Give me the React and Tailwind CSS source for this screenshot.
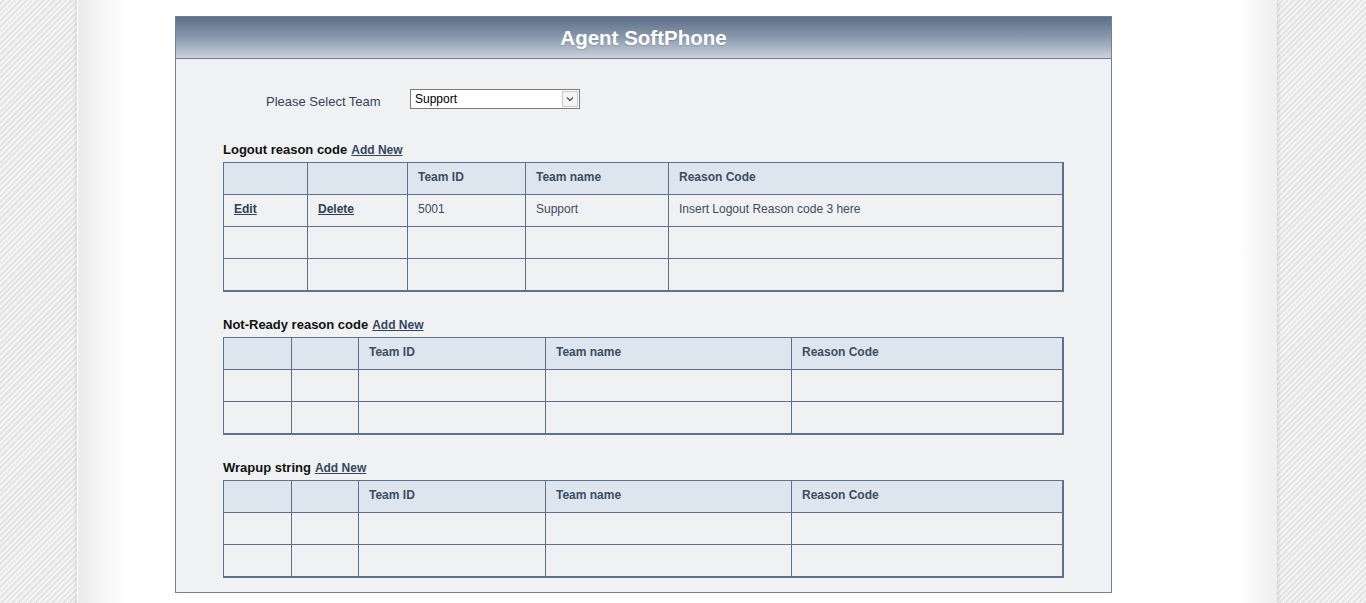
import React from "react";

const stripe =
  "bg-[repeating-linear-gradient(135deg,#f4f4f4_0px,#f4f4f4_2px,#e4e4e4_2px,#e4e4e4_4px)]";

function Cell({ cell, last, lastRow, header }) {
  const base = `border-[#5f7189] pl-[10px] pt-[8px] leading-[13px] text-[12px] ${
    last ? "" : "border-r"
  } ${lastRow ? "h-[31px]" : "h-[32px] border-b"}`;
  if (header) {
    return (
      <div className={`${base} bg-[#dde5ee] font-bold text-[#3c4d63]`}>{cell.text}</div>
    );
  }
  return (
    <div className={`${base} text-[#3e4c5c]`}>
      {cell.link ? (
        <span className="font-bold underline text-[#2f3f55]">{cell.text}</span>
      ) : (
        <span>{cell.text}</span>
      )}
    </div>
  );
}

function Table({ widths, rows }) {
  const cols = widths.map((w) => `${w}px`).join(" ");
  const header = ["", "", "Team ID", "Team name", "Reason Code"].map((t) => ({ text: t }));
  return (
    <div className="w-[841px] border-t border-l border-r-2 border-b-2 border-[#5f7189]">
      <div className="grid" style={{ gridTemplateColumns: cols }}>
        {header.map((h, i) => (
          <Cell key={"h" + i} cell={h} header last={i === 4} />
        ))}
        {rows.map((r, ri) =>
          r.map((c, i) => (
            <Cell
              key={"r" + ri + "c" + i}
              cell={c}
              last={i === 4}
              lastRow={ri === rows.length - 1}
            />
          ))
        )}
      </div>
    </div>
  );
}

function Section({ title, widths, rows }) {
  return (
    <div className="flex flex-col">
      <div className="h-[16px] flex items-center gap-[4px] mb-[4px]">
        <span className="text-[13px] font-bold text-[#111]">{title}</span>
        <span className="text-[12px] font-bold underline text-[#34465e]">Add New</span>
      </div>
      <Table widths={widths} rows={rows} />
    </div>
  );
}

const emptyRow = () => [0, 1, 2, 3, 4].map(() => ({ text: "" }));

export default function App() {
  return (
    <div
      className={`w-[1366px] h-[603px] overflow-hidden flex ${stripe}`}
      style={{ fontFamily: '"Liberation Sans", Arial, sans-serif' }}
    >
      <div className="w-[73px] shrink-0" />
      <div className="w-[4px] shrink-0 bg-[linear-gradient(to_right,rgba(0,0,0,0),rgba(0,0,0,0.07))]" />
      <div className="w-[1200px] shrink-0 h-full bg-[linear-gradient(to_right,#ebebeb_0px,#ffffff_48px,#ffffff_1160px,#eeeeee_1199px)] border-l border-white">
        <div className="ml-[97px] mt-[16px] w-[937px] border border-[#6f8197] bg-[#f0f1f3]">
          <div className="h-[42px] pt-[2px] border-b border-[#6f8197] bg-[linear-gradient(to_bottom,#5d6f87,#8a99ad_50%,#cbd3dc)] flex items-center justify-center">
            <span className="text-[20.5px] font-bold text-white [text-shadow:0_1px_1px_rgba(0,0,0,0.15)]">
              Agent SoftPhone
            </span>
          </div>
          <div className="pt-[30px] pb-[14px] pl-[47px]">
            <div className="flex items-center h-[20px]">
              <span className="ml-[43px] w-[144px] pt-[5px] text-[13px] text-[#33445a]">
                Please Select Team
              </span>
              <div className="w-[170px] h-[20px] bg-white border border-[#7b7b7b] flex items-center">
                <span className="flex-1 pl-[4px] text-[12px] text-black">Support</span>
                <div className="w-[16px] h-[16px] mr-[1px] border border-[#c8c8c8] bg-[#f4f4f4] flex items-center justify-center">
                  <svg width="8" height="6" viewBox="0 0 8 6">
                    <path d="M1 1.5 L4 4.5 L7 1.5" stroke="#555" strokeWidth="1.3" fill="none" />
                  </svg>
                </div>
              </div>
            </div>
            <div className="mt-[33px] flex flex-col gap-[25px]">
              <Section
                title="Logout reason code"
                widths={[84, 100, 118, 143, 393]}
                rows={[
                  [
                    { link: true, text: "Edit" },
                    { link: true, text: "Delete" },
                    { text: "5001" },
                    { text: "Support" },
                    { text: "Insert Logout Reason code 3 here" },
                  ],
                  emptyRow(),
                  emptyRow(),
                ]}
              />
              <Section
                title="Not-Ready reason code"
                widths={[68, 67, 187, 246, 270]}
                rows={[emptyRow(), emptyRow()]}
              />
              <Section
                title="Wrapup string"
                widths={[68, 67, 187, 246, 270]}
                rows={[emptyRow(), emptyRow()]}
              />
            </div>
          </div>
        </div>
      </div>
      <div className="w-[4px] shrink-0 bg-[linear-gradient(to_right,rgba(0,0,0,0.08),rgba(0,0,0,0))]" />
    </div>
  );
}
